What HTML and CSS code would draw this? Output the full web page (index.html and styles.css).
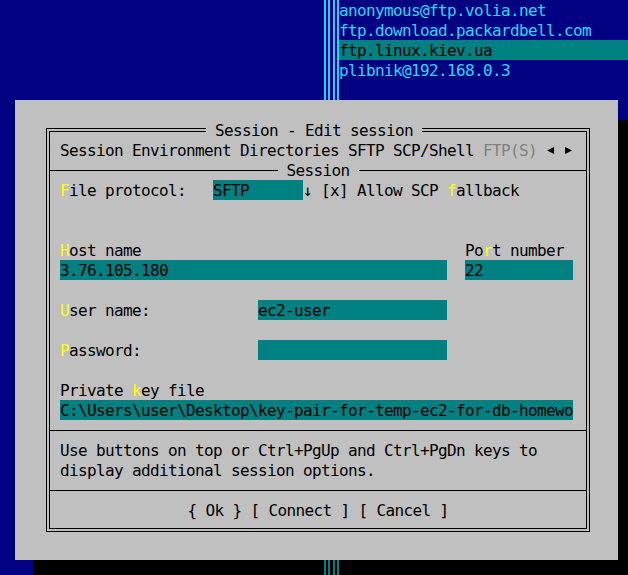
FILE: index.html
```html
<!DOCTYPE html>
<html>
<head>
<meta charset="utf-8">
<title>Session - Edit session</title>
<link rel="stylesheet" href="styles.css">
</head>
<body>
<div class="screen">
  <div class="panels">
    <div class="panel-left"></div>
    <div class="divider"><span class="dline"></span><span class="dline"></span></div>
    <ul class="panel-right">
      <li>anonymous@ftp.volia.net</li>
      <li>ftp.download.packardbell.com</li>
      <li class="current">ftp.linux.kiev.ua</li>
      <li>plibnik@192.168.0.3</li>
    </ul>
  </div>
  <div class="shadow"></div>
  <div class="dialog">
    <fieldset class="frame">
      <legend class="frame-title"> Session - Edit session </legend>
      <div class="row">Session Environment Directories SFTP SCP/Shell <span class="off">FTP(S)</span> <i class="tri tri-left"></i> <i class="tri tri-right"></i></div>
      <div class="sep"><span class="sep-title"> Session </span></div>
      <div class="row"><span class="hot">F</span>ile protocol:   <span class="field w10">SFTP</span>↓ [x] Allow SCP <span class="hot">f</span>allback</div>
      <div class="row"></div>
      <div class="row"></div>
      <div class="row"><span class="hot">H</span>ost name                                    Po<span class="hot">r</span>t number</div>
      <div class="row"><span class="field w43">3.76.105.180</span>  <span class="field w12">22</span></div>
      <div class="row"></div>
      <div class="row"><span class="hot">U</span>ser name:            <span class="field w21">ec2-user</span></div>
      <div class="row"></div>
      <div class="row"><span class="hot">P</span>assword:             <span class="field w21"></span></div>
      <div class="row"></div>
      <div class="row">Private <span class="hot">k</span>ey file</div>
      <div class="row"><span class="field w57">C:\Users\user\Desktop\key-pair-for-temp-ec2-for-db-homewo</span></div>
      <div class="sep"></div>
      <div class="row">Use buttons on top or Ctrl+PgUp and Ctrl+PgDn keys to</div>
      <div class="row">display additional session options.</div>
      <div class="sep"></div>
      <div class="row buttons">{ Ok } [ Connect ] [ Cancel ]</div>
    </fieldset>
  </div>
</div>
</body>
</html>
```

FILE: styles.css
```css
* { box-sizing: border-box; }

html, body {
  margin: 0;
  padding: 0;
}

body {
  --cw: 9px;
  width: 628px;
  height: 575px;
  overflow: hidden;
  background: #000080;
  font-family: "DejaVu Sans Mono", monospace;
  font-size: 16px;
  letter-spacing: -0.6328px;
  line-height: 20px;
}

.screen {
  position: relative;
  width: 628px;
  height: 575px;
  overflow: hidden;
}

/* ---------- file panels behind the dialog ---------- */
.panels {
  display: flex;
  height: 575px;
}

.panel-left {
  width: 321px;
  flex: none;
}

.divider {
  display: flex;
  flex: none;
}

.dline {
  display: block;
  width: 9px;
  background: linear-gradient(to right,
    transparent 3px, #1ed2ff 3px, #1ed2ff 5px,
    transparent 5px, transparent 7px, #1ed2ff 7px, #1ed2ff 9px);
}

.panel-right {
  list-style: none;
  margin: 0;
  padding: 0;
  flex: 1;
  color: #28d8ff;
}

.panel-right li {
  height: 20px;
  line-height: 22px;
  white-space: pre;
}

.panel-right .current {
  background: #008080;
  color: #000;
}

/* ---------- dialog ---------- */
.shadow {
  position: absolute;
  left: 33px;
  top: 120px;
  width: 603px;
  height: 460px;
  background:
    linear-gradient(to right,
      transparent 291px, #008080 291px, #008080 293px,
      transparent 293px, transparent 295px, #008080 295px, #008080 297px,
      transparent 297px, transparent 300px, #008080 300px, #008080 302px,
      transparent 302px, transparent 304px, #008080 304px, #008080 306px,
      transparent 306px),
    #000;
}

.dialog {
  position: absolute;
  left: 15px;
  top: 100px;
  width: 603px;
  height: 460px;
  background: #c0c0c0;
  color: #000;
  padding: 20px 0 0 31px;
}

.frame {
  margin: 0;
  padding: 0 0 8px 0;
  min-width: 0;
  width: 544px;
  border: 4px double #000;
}

.frame-title {
  margin-left: 156px;
  padding: 0;
  height: 20px;
  line-height: 22px;
  white-space: pre;
}

.row {
  height: 20px;
  line-height: 22px;
  padding-left: 10px;
  white-space: pre;
}

.buttons {
  padding-left: 0;
  text-align: center;
}

.hot { color: #ffff00; }

.off { color: #808080; }

.field {
  display: inline-block;
  vertical-align: top;
  height: 20px;
  line-height: 22px;
  background: #008080;
  color: #000;
  overflow: hidden;
}

.w10 { width: calc(var(--cw) * 10); }
.w12 { width: calc(var(--cw) * 12); }
.w21 { width: calc(var(--cw) * 21); }
.w43 { width: calc(var(--cw) * 43); }
.w57 { width: calc(var(--cw) * 57); }

.tri {
  display: inline-block;
  vertical-align: top;
  width: 9px;
  height: 20px;
  background: #000;
}

.tri-left { clip-path: polygon(1px 10.5px, 8px 7px, 8px 14px); }
.tri-right { clip-path: polygon(1px 7px, 1px 14px, 8px 10.5px); }

.sep {
  display: flex;
  height: 20px;
}

.sep::before,
.sep::after {
  content: "";
  flex: 1;
  height: 1px;
  margin-top: 10px;
  background: #000;
}

.sep-title {
  line-height: 22px;
  height: 20px;
  white-space: pre;
}
```
